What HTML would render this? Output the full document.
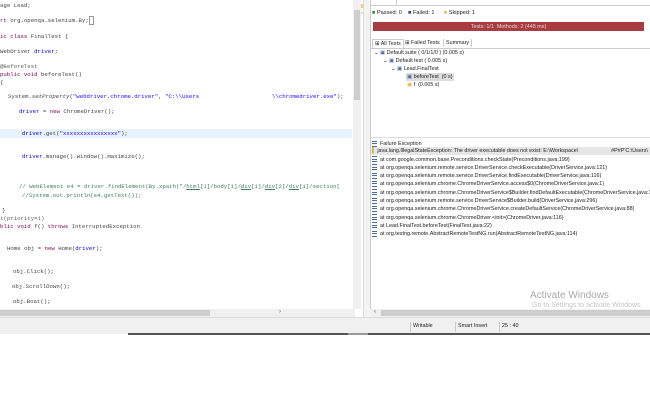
<!DOCTYPE html>
<html><head><style>
body{margin:0;width:650px;height:400px;background:#fff;position:relative;overflow:hidden;font-family:"Liberation Sans",sans-serif}
.a{position:absolute;white-space:pre}
.c{font-family:"Liberation Mono",monospace;font-size:5.7px;color:#444;line-height:8px}
.k{color:#7f0055}
.s{color:#2a00ff}
.f{color:#0000c0}
.g{color:#3f7f5f}
.an{color:#646464}
.r{font-size:5.4px;color:#222;line-height:8px}
.ic{display:inline-block;width:5px;height:4px;border-top:1px solid #4a6da0;border-bottom:1px solid #4a6da0;background:linear-gradient(#4a6da0,#4a6da0) 0 1.5px/5px 1px no-repeat;margin-right:3px;vertical-align:middle}
</style></head><body>
<!-- editor -->
<div class="a c" style="left:0;top:2px">age Lead;</div>
<div class="a c" style="left:0;top:17px"><span class="k">rt</span> org.openqa.selenium.By;<span style="border:1px solid #999">&nbsp;</span></div>
<div class="a c" style="left:0;top:33px"><span class="k">ic class</span> FinalTest {</div>
<div class="a c" style="left:0;top:48px">WebDriver <span class="f">driver</span>;</div>
<div class="a c an" style="left:0;top:63px">@BeforeTest</div>
<div class="a c" style="left:0;top:71px"><span class="k">public void</span> beforeTest()</div>
<div class="a c" style="left:0;top:79px">{</div>
<div class="a c" style="left:8px;top:93px">System.<i>setProperty</i>(<span class="s">"webdriver.chrome.driver"</span>, <span class="s">"C:\\Users</span></div>
<div class="a c" style="left:272px;top:93px"><span class="s">\\chromedriver.exe"</span>);</div>
<div class="a c" style="left:19px;top:108px"><span class="f">driver</span> = <span class="k">new</span> ChromeDriver();</div>
<div style="position:absolute;left:0;top:129px;width:352px;height:9px;background:#e8f2fe"></div>
<div class="a c" style="left:22px;top:130px"><span class="f">driver</span>.get(<span class="s">"xxxxxxxxxxxxxxxx"</span>);</div>
<div class="a c" style="left:22px;top:153px"><span class="f">driver</span>.manage().window().maximize();</div>
<div class="a c g" style="left:19px;top:183px">// WebElement e4 = driver.findElement(By.xpath("/<u>html</u>[1]/body[1]/<u>div</u>[1]/<u>div</u>[2]/<u>div</u>[1]/section[</div>
<div class="a c g" style="left:22px;top:192px">//System.out.println(e4.getText());</div>
<div class="a c" style="left:2px;top:207px">}</div>
<div class="a c an" style="left:0;top:215px">t(priority=1)</div>
<div class="a c" style="left:0;top:223px"><span class="k">blic void</span> f() <span class="k">throws</span> InterruptedException</div>
<div class="a c" style="left:7px;top:245px">Home obj = <span class="k">new</span> Home(<span class="f">driver</span>);</div>
<div class="a c" style="left:13px;top:268px">obj.Click();</div>
<div class="a c" style="left:12px;top:283px">obj.ScrollDown();</div>
<div class="a c" style="left:13px;top:298px">obj.Boat();</div>
<!-- vertical scrollbar -->
<div style="position:absolute;left:353px;top:0;width:8px;height:309px;background:#f0f0f0"></div>
<div style="position:absolute;left:354px;top:10px;width:6px;height:90px;background:#cdcdcd"></div>
<div style="position:absolute;left:361px;top:4px;width:4px;height:4px;background:#e8d27a"></div>
<div style="position:absolute;left:361px;top:12px;width:4px;height:2px;background:#f0e2a0"></div>
<!-- hscroll -->
<div style="position:absolute;left:0;top:309px;width:355px;height:8px;background:#f0f0f0"></div>
<div style="position:absolute;left:0;top:310px;width:210px;height:6px;background:#cdcdcd"></div>
<div class="a" style="left:279px;top:309px;font-size:6px;color:#555">›</div>
<!-- divider -->
<div style="position:absolute;left:363px;top:0;width:6px;height:317px;background:#f3f3f3;border-left:1px solid #ddd;border-right:1px solid #ccc"></div>
<!-- right panel -->
<div style="position:absolute;left:370px;top:0;width:280px;height:5px;border-bottom:1px solid #ccc"></div>
<div style="position:absolute;left:370px;top:0;width:25px;height:5px;border:1px solid #ccc;border-top:0;background:#fff"></div>
<div class="a r" style="left:372px;top:9px;font-size:5.6px"><span style="color:#3a8a3a">■</span> Passed: 0 &nbsp;&nbsp; <span style="color:#35507a">■</span> Failed: 1 &nbsp;&nbsp;&nbsp;&nbsp; <span style="color:#e0c060">■</span> Skipped: 1</div>
<div style="position:absolute;left:373px;top:22px;width:271px;height:9px;background:#a83c40"></div>
<div class="a r" style="left:373px;top:23px;width:271px;text-align:center;color:#ddd">Tests: 1/1  Methods: 2 (448 ms)</div>
<div style="position:absolute;left:370px;top:48px;width:280px;border-top:1px solid #ccc"></div>
<div class="a r" style="left:372px;top:39px;border:1px solid #ccc;border-bottom:0;background:#fff;padding:0 2px">⊞ All Tests</div>
<div class="a r" style="left:405px;top:39px">⊞ Failed Tests</div>
<div class="a r" style="left:443px;top:39px;border-left:1px solid #ccc;border-right:1px solid #ccc;padding:0 2px">Summary</div>
<div class="a r" style="left:374px;top:49px">⌄ <span style="color:#4a6da0">▣</span> Default suite ( 0/1/1/0 ) (0.005 s)</div>
<div class="a r" style="left:383px;top:57px">⌄ <span style="color:#4a6da0">▣</span> Default test ( 0.005 s)</div>
<div class="a r" style="left:391px;top:65px">⌄ <span style="color:#4a6da0">▣</span> Lead.FinalTest</div>
<div style="position:absolute;left:406px;top:73px;width:48px;height:8px;background:#ddd"></div>
<div class="a r" style="left:407px;top:73px"><span style="color:#4a6da0">▣</span> beforeTest  (0 s)</div>
<div class="a r" style="left:407px;top:81px"><span style="color:#d8b84a">▣</span> f  (0.005 s)</div>
<div style="position:absolute;left:370px;top:137px;width:280px;height:180px;border-top:1px solid #ddd"></div>
<div class="a r" style="left:372px;top:140px"><span class="ic"></span>Failure Exception</div>
<div style="position:absolute;left:371px;top:147px;width:279px;height:8px;background:#e6e6e6"></div>
<div class="a r" style="left:372px;top:147px"><span style="color:#d8b84a">▌</span> java.lang.IllegalStateException: The driver executable does not exist: E:\Workspace\                      #P#P'C:\Users\</div>
<div class="a r" style="left:372px;top:155.5px"><span class="ic"></span>at com.google.common.base.Preconditions.checkState(Preconditions.java:199)</div>
<div class="a r" style="left:372px;top:163.8px"><span class="ic"></span>at org.openqa.selenium.remote.service.DriverService.checkExecutable(DriverService.java:121)</div>
<div class="a r" style="left:372px;top:172.1px"><span class="ic"></span>at org.openqa.selenium.remote.service.DriverService.findExecutable(DriverService.java:116)</div>
<div class="a r" style="left:372px;top:180.4px"><span class="ic"></span>at org.openqa.selenium.chrome.ChromeDriverService.access$0(ChromeDriverService.java:1)</div>
<div class="a r" style="left:372px;top:188.7px"><span class="ic"></span>at org.openqa.selenium.chrome.ChromeDriverService$Builder.findDefaultExecutable(ChromeDriverService.java:137)</div>
<div class="a r" style="left:372px;top:197px"><span class="ic"></span>at org.openqa.selenium.remote.service.DriverService$Builder.build(DriverService.java:296)</div>
<div class="a r" style="left:372px;top:205.3px"><span class="ic"></span>at org.openqa.selenium.chrome.ChromeDriverService.createDefaultService(ChromeDriverService.java:88)</div>
<div class="a r" style="left:372px;top:213.6px"><span class="ic"></span>at org.openqa.selenium.chrome.ChromeDriver.&lt;init&gt;(ChromeDriver.java:116)</div>
<div class="a r" style="left:372px;top:221.9px"><span class="ic"></span>at Lead.FinalTest.beforeTest(FinalTest.java:22)</div>
<div class="a r" style="left:372px;top:230.2px"><span class="ic"></span>at org.testng.remote.AbstractRemoteTestNG.run(AbstractRemoteTestNG.java:114)</div>
<div class="a" style="left:530px;top:290px;font-size:10px;color:#aaa">Activate Windows</div>
<div class="a" style="left:532px;top:302px;font-size:7px;color:#c4c4c4">Go to Settings to activate Windows.</div>
<div style="position:absolute;left:370px;top:309px;width:280px;height:8px;background:#f0f0f0"></div>
<div style="position:absolute;left:381px;top:310px;width:269px;height:6px;background:#cdcdcd"></div>
<div class="a" style="left:374px;top:309px;font-size:6px;color:#555">‹</div>
<!-- status bar -->
<div style="position:absolute;left:0;top:317px;width:650px;height:16px;background:#f0f0f0;border-top:1px solid #ddd"></div>
<div class="a r" style="left:410px;top:322px;border-left:1px solid #ccc;padding-left:2px;height:10px;width:42px">Writable</div>
<div class="a r" style="left:455px;top:322px;border-left:1px solid #ccc;padding-left:2px;height:10px;width:40px">Smart Insert</div>
<div class="a r" style="left:499px;top:322px;border-left:1px solid #ccc;padding-left:2px;height:10px">25 : 40</div>
<div style="position:absolute;left:128px;top:333px;width:522px;height:2px;background:#555"></div>
<div style="position:absolute;left:348px;top:333px;width:20px;height:2px;background:#999"></div>
</body></html>
